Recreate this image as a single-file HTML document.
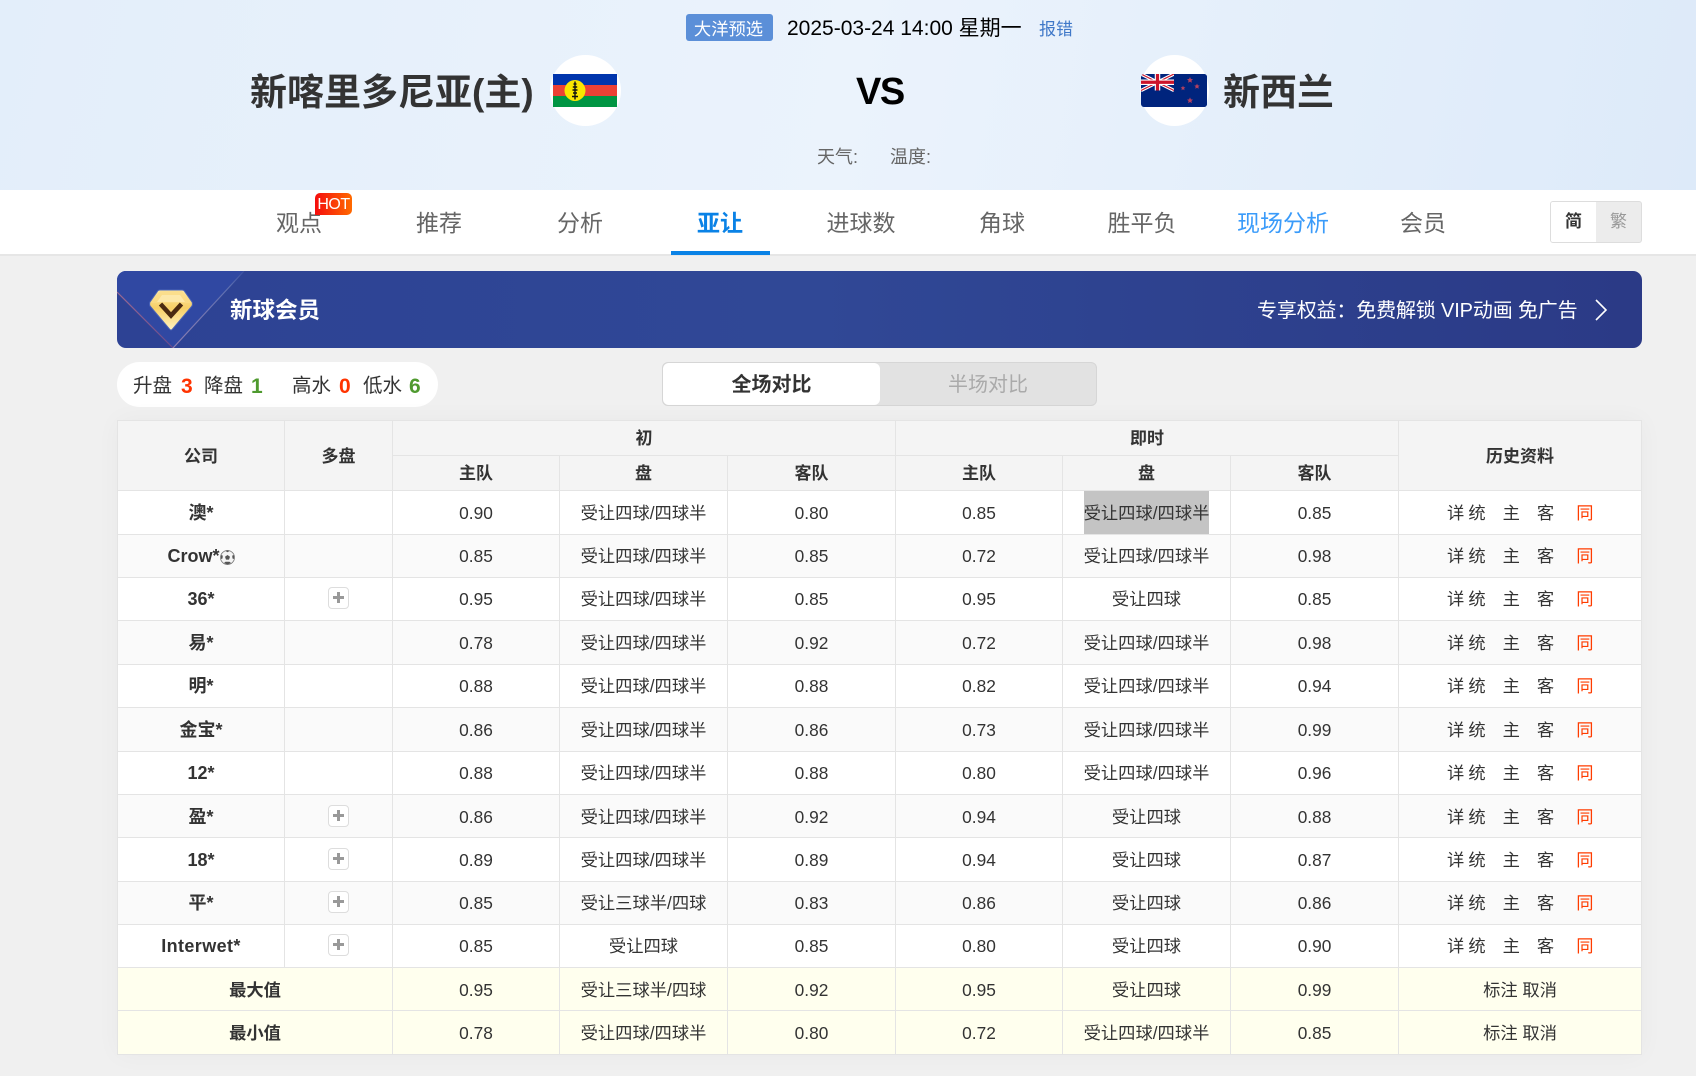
<!DOCTYPE html>
<html lang="zh-CN">
<head>
<meta charset="utf-8">
<title>亚让</title>
<style>
*{box-sizing:border-box}
html,body{margin:0;padding:0}
body{width:1696px;height:1076px;position:relative;overflow:hidden;background:#f0f0f0;font-family:"Liberation Sans","Noto Sans CJK SC",sans-serif;color:#333}
.a{position:absolute;white-space:nowrap}
#hd{left:0;top:0;width:1696px;height:190px;background:linear-gradient(100deg,#e3eefa 0%,#ebf3fc 50%,#ddeaf9 100%)}
#nav{left:0;top:190px;width:1696px;height:66px;background:#fff;border-bottom:2px solid #e6e6e6}
.n{top:207px;width:140px;text-align:center;font-size:23px;line-height:32px;color:#666}
table{border-collapse:collapse;table-layout:fixed;width:1524px;font-size:17.3px;color:#333;text-align:center}
td,th{border:1px solid #e4e4e4;padding:1px 0 0;vertical-align:middle;line-height:24px;overflow:hidden;white-space:nowrap}
th{background:#f4f4f4;font-weight:700;font-size:17px}
th.r{padding-top:3px}
tbody td{background:#fff}
tbody tr.e td{background:#fafafa}
tbody tr.s td{background:#ffffee}
tbody tr.u td{padding-top:0}
td.b{font-weight:700;font-size:18px}
td.h{text-align:left;padding-left:48px}
td.h i{font-style:normal;margin-right:17px}
td.h i.x{margin-right:4px}
td.h i.k{margin-right:22px}
td.h i.t{margin-right:0;color:#ff3c00}
.p{display:inline-block;width:21px;height:22px;border:1px solid #ddd;border-radius:4px;background:#fff;vertical-align:middle;position:relative;top:-2px}
.p:before{content:"";position:absolute;left:4px;top:8px;width:11px;height:3px;background:#999}
.p:after{content:"";position:absolute;left:8px;top:4px;width:3px;height:11px;background:#999}
.g{display:inline-block;background:#c4c4c4;line-height:44px;height:43px;vertical-align:top;margin-top:-1px;overflow:hidden}
</style>
</head>
<body>
<div class="a" id="hd"></div>
<div class="a" style="left:686px;top:14px;width:87px;height:27px;background:#5b8fd8;border-radius:3px;color:#fff;font-size:17.3px;line-height:30px;text-align:center;text-indent:-2px">大洋预选</div>
<div class="a" style="left:787px;top:15px;font-size:21px;line-height:27px;color:#000">2025-03-24 14:00 星期一</div>
<div class="a" style="left:1039px;top:16px;font-size:17px;line-height:27px;color:#3f78c8">报错</div>
<div class="a" style="left:250px;top:68px;font-size:37px;line-height:50px;font-weight:700;color:#333">新喀里多尼亚(主)</div>
<div class="a" style="left:550px;top:55px;width:71px;height:71px;border-radius:50%;background:#fff"></div>
<svg class="a" style="left:553px;top:74px" width="64" height="33" viewBox="0 0 64 33">
<rect width="64" height="11" fill="#0035ad"/><rect y="11" width="64" height="11" fill="#ed4135"/><rect y="22" width="64" height="11" fill="#009543"/>
<circle cx="22" cy="16.5" r="10.5" fill="#fae600"/>
<path d="M22 7.5V25.5M20.5 10h3M19.8 13h4.4M19.5 16h5M20 19h4M19 22.5h6" stroke="#111" stroke-width="1.4" fill="none"/>
</svg>
<div class="a" style="left:856px;top:65px;font-size:38px;line-height:54px;font-weight:700;color:#000;letter-spacing:-1.5px">VS</div>
<div class="a" style="left:1140px;top:55px;width:69px;height:71px;border-radius:50%;background:#fff"></div>
<svg class="a" style="left:1141px;top:74px" width="66" height="33" viewBox="0 0 66 33">
<defs><clipPath id="c"><rect width="66" height="33" rx="3"/></clipPath></defs>
<g clip-path="url(#c)">
<rect width="66" height="33" fill="#00247d"/>
<path d="M0 0L33 16.5M33 0L0 16.5" stroke="#fff" stroke-width="3.4"/>
<path d="M0 0L33 16.5M33 0L0 16.5" stroke="#cc142b" stroke-width="1.2"/>
<path d="M16.5 0V16.5M0 8.25H33" stroke="#fff" stroke-width="5.5"/>
<path d="M16.5 0V16.5M0 8.25H33" stroke="#cc142b" stroke-width="3.2"/>
<rect x="33" width="33" height="33" fill="#00247d"/>
<g fill="#b5405f">
<path d="M49 3l.9 2 2.1.2-1.6 1.4.5 2.1-1.9-1.1-1.9 1.1.5-2.1-1.6-1.4 2.1-.2z"/>
<path d="M56 9.6l.8 1.8 1.9.2-1.4 1.2.4 1.9-1.7-1-1.7 1 .4-1.9-1.4-1.2 1.9-.2z"/>
<path d="M42 11.6l.7 1.6 1.7.2-1.3 1.1.4 1.7-1.5-.9-1.5.9.4-1.7-1.3-1.1 1.7-.2z"/>
<path d="M49 23.4l.9 2 2.1.2-1.6 1.4.5 2.1-1.9-1.1-1.9 1.1.5-2.1-1.6-1.4 2.1-.2z"/>
</g></g>
</svg>
<div class="a" style="left:1223px;top:68px;font-size:37px;line-height:50px;font-weight:700;color:#333">新西兰</div>
<div class="a" style="left:817px;top:145px;font-size:18px;line-height:24px;color:#666">天气:</div>
<div class="a" style="left:890px;top:145px;font-size:18px;line-height:24px;color:#666">温度:</div>

<div class="a" id="nav"></div>
<div class="a n" style="left:229px">观点</div>
<div class="a" style="left:315px;top:193px;width:37px;height:22px;border-radius:5px 5px 5px 0;background:linear-gradient(90deg,#f50d0d,#ff6a00);color:#fff;font-size:16px;line-height:23px;text-align:center;letter-spacing:-.5px">HOT</div>
<div class="a n" style="left:369px">推荐</div>
<div class="a n" style="left:510px">分析</div>
<div class="a n" style="left:650px;color:#0a82e6;font-weight:700">亚让</div>
<div class="a" style="left:671px;top:251px;width:99px;height:4px;background:#0a82e6"></div>
<div class="a n" style="left:791px">进球数</div>
<div class="a n" style="left:932px">角球</div>
<div class="a n" style="left:1072px">胜平负</div>
<div class="a n" style="left:1213px;color:#3a9bfa">现场分析</div>
<div class="a n" style="left:1353px">会员</div>
<div class="a" style="left:1550px;top:201px;width:92px;height:42px;border:1px solid #ddd;border-radius:3px;background:#ececec;overflow:hidden">
<div style="position:absolute;left:0;top:0;width:45px;height:40px;background:#fff;color:#333;font-weight:700;font-size:17px;line-height:40px;text-align:center">简</div>
<div style="position:absolute;left:45px;top:0;width:45px;height:40px;color:#999;font-size:17px;line-height:40px;text-align:center">繁</div>
</div>

<svg class="a" style="left:117px;top:271px" width="1525" height="77" viewBox="0 0 1525 77">
<defs>
<linearGradient id="bg" x1="0" y1="0" x2="1" y2="0"><stop offset="0" stop-color="#2d4294"/><stop offset=".45" stop-color="#304896"/><stop offset="1" stop-color="#2b3a86"/></linearGradient>
<linearGradient id="go" x1="0" y1="0" x2="0" y2="1"><stop offset="0" stop-color="#fde9a8"/><stop offset=".45" stop-color="#f7cf66"/><stop offset="1" stop-color="#fff2c0"/></linearGradient>
<linearGradient id="l1" x1="0" y1="0" x2="1" y2="1"><stop offset="0" stop-color="#9c6a92"/><stop offset="1" stop-color="#6a4a8c"/></linearGradient>
<linearGradient id="l2" x1="0" y1="1" x2="1" y2="0"><stop offset="0" stop-color="#8f7fb0"/><stop offset=".8" stop-color="#5d6fb0"/><stop offset="1" stop-color="#3a4fa0"/></linearGradient>
<clipPath id="bc"><rect width="1525" height="77" rx="9"/></clipPath>
</defs>
<g clip-path="url(#bc)">
<rect width="1525" height="77" fill="url(#bg)"/>
<path d="M0 0H127L56 77L0 21Z" fill="#3048a2"/>
<path d="M0 21L56 77" stroke="url(#l1)" stroke-width="1.2" fill="none"/>
<path d="M56 77L127 0" stroke="url(#l2)" stroke-width="1.2" fill="none"/>
<path d="M43 19H65Q67 19 68 21L75 31Q76 33 75 35L55.5 58Q54 60 52.5 58L33 35Q32 33 33 31L40 21Q41 19 43 19Z" fill="url(#go)" stroke="#4a63b8" stroke-width="1"/>
<path d="M33 32L43 20H65L75 32Z" fill="#fbdc86" opacity=".7"/>
<path d="M45 24H63L68 31H40Z" fill="#fff0c0" opacity=".6"/>
<path d="M43.5 33L54 44.5L64.5 33" fill="none" stroke="#4a2a10" stroke-width="4.5"/>
</g>
</svg>
<div class="a" style="left:230px;top:294px;font-size:22.5px;line-height:34px;font-weight:700;color:#fff">新球会员</div>
<div class="a" style="left:1257px;top:297px;font-size:20px;line-height:28px;color:#fff;letter-spacing:-.15px">专享权益：免费解锁 VIP动画 免广告</div>
<svg class="a" style="left:1593px;top:298px" width="16" height="24" viewBox="0 0 16 24"><path d="M3 2L13 12L3 22" fill="none" stroke="#fff" stroke-width="1.6"/></svg>

<div class="a" style="left:117px;top:362px;width:321px;height:45px;border-radius:22.5px;background:#fff;font-size:19.5px;line-height:49px;color:#333">
<span style="position:absolute;left:16px">升盘</span><b style="position:absolute;left:64px;color:#ff3300;font-size:21px">3</b>
<span style="position:absolute;left:87px">降盘</span><b style="position:absolute;left:134px;color:#4f9a2f;font-size:21px">1</b>
<span style="position:absolute;left:175px">高水</span><b style="position:absolute;left:222px;color:#ff3300;font-size:21px">0</b>
<span style="position:absolute;left:246px">低水</span><b style="position:absolute;left:292px;color:#4f9a2f;font-size:21px">6</b>
</div>

<div class="a" style="left:662px;top:362px;width:435px;height:44px;background:#e2e2e2;border:1px solid #d6d6d6;border-radius:6px"></div>
<div class="a" style="left:663px;top:363px;width:217px;height:42px;background:#fff;border-radius:6px;font-size:20px;line-height:44px;font-weight:700;text-align:center;color:#333">全场对比</div>
<div class="a" style="left:880px;top:363px;width:216px;height:42px;font-size:20px;line-height:44px;text-align:center;color:#aaa">半场对比</div>

<div class="a" style="left:117px;top:420px;box-shadow:0 0 24px rgba(0,0,0,.035)">
<table>
<colgroup><col style="width:167px"><col style="width:108px"><col style="width:167px"><col style="width:168px"><col style="width:168px"><col style="width:167px"><col style="width:168px"><col style="width:168px"><col style="width:243px"></colgroup>
<thead>
<tr style="height:35px"><th rowspan="2" class="r">公司</th><th rowspan="2" class="r">多盘</th><th colspan="3">初</th><th colspan="3">即时</th><th rowspan="2" class="r">历史资料</th></tr>
<tr style="height:35px"><th>主队</th><th>盘</th><th>客队</th><th>主队</th><th>盘</th><th>客队</th></tr>
</thead>
<tbody>
<tr style="height:43px"><td class="b">澳*</td><td></td><td>0.90</td><td>受让四球/四球半</td><td>0.80</td><td>0.85</td><td><span class="g">受让四球/四球半</span></td><td>0.85</td><td class="h"><i class="x">详</i><i>统</i><i>主</i><i class="k">客</i><i class="t">同</i></td></tr>
<tr class="e u" style="height:43px"><td class="b">Crow*<svg width="15" height="15" viewBox="0 0 15 15" style="vertical-align:-3px"><circle cx="7.5" cy="7.5" r="7" fill="#f4f4f4" stroke="#777" stroke-width=".8"/><path d="M7.5 5L10 6.8 9 9.6H6L5 6.8Z" fill="#555"/><path d="M5.5 1L7.5 2.2 9.5 1 8 .4H7ZM1 5L2.8 5.6 2.5 8.5 1 9ZM14 5L12.2 5.6 12.5 8.5 14 9ZM4 13L5.5 11.8H9.5L11 13 7.5 14.6Z" fill="#555"/></svg></td><td></td><td>0.85</td><td>受让四球/四球半</td><td>0.85</td><td>0.72</td><td>受让四球/四球半</td><td>0.98</td><td class="h"><i class="x">详</i><i>统</i><i>主</i><i class="k">客</i><i class="t">同</i></td></tr>
<tr class="u" style="height:43px"><td class="b">36*</td><td><span class="p"></span></td><td>0.95</td><td>受让四球/四球半</td><td>0.85</td><td>0.95</td><td>受让四球</td><td>0.85</td><td class="h"><i class="x">详</i><i>统</i><i>主</i><i class="k">客</i><i class="t">同</i></td></tr>
<tr class="e" style="height:44px"><td class="b">易*</td><td></td><td>0.78</td><td>受让四球/四球半</td><td>0.92</td><td>0.72</td><td>受让四球/四球半</td><td>0.98</td><td class="h"><i class="x">详</i><i>统</i><i>主</i><i class="k">客</i><i class="t">同</i></td></tr>
<tr class="u" style="height:43px"><td class="b">明*</td><td></td><td>0.88</td><td>受让四球/四球半</td><td>0.88</td><td>0.82</td><td>受让四球/四球半</td><td>0.94</td><td class="h"><i class="x">详</i><i>统</i><i>主</i><i class="k">客</i><i class="t">同</i></td></tr>
<tr class="e" style="height:44px"><td class="b">金宝*</td><td></td><td>0.86</td><td>受让四球/四球半</td><td>0.86</td><td>0.73</td><td>受让四球/四球半</td><td>0.99</td><td class="h"><i class="x">详</i><i>统</i><i>主</i><i class="k">客</i><i class="t">同</i></td></tr>
<tr class="u" style="height:43px"><td class="b">12*</td><td></td><td>0.88</td><td>受让四球/四球半</td><td>0.88</td><td>0.80</td><td>受让四球/四球半</td><td>0.96</td><td class="h"><i class="x">详</i><i>统</i><i>主</i><i class="k">客</i><i class="t">同</i></td></tr>
<tr class="e" style="height:43px"><td class="b">盈*</td><td><span class="p"></span></td><td>0.86</td><td>受让四球/四球半</td><td>0.92</td><td>0.94</td><td>受让四球</td><td>0.88</td><td class="h"><i class="x">详</i><i>统</i><i>主</i><i class="k">客</i><i class="t">同</i></td></tr>
<tr style="height:44px"><td class="b">18*</td><td><span class="p"></span></td><td>0.89</td><td>受让四球/四球半</td><td>0.89</td><td>0.94</td><td>受让四球</td><td>0.87</td><td class="h"><i class="x">详</i><i>统</i><i>主</i><i class="k">客</i><i class="t">同</i></td></tr>
<tr class="e u" style="height:43px"><td class="b">平*</td><td><span class="p"></span></td><td>0.85</td><td>受让三球半/四球</td><td>0.83</td><td>0.86</td><td>受让四球</td><td>0.86</td><td class="h"><i class="x">详</i><i>统</i><i>主</i><i class="k">客</i><i class="t">同</i></td></tr>
<tr class="u" style="height:43px"><td class="b" style="letter-spacing:.4px">Interwet*</td><td><span class="p"></span></td><td>0.85</td><td>受让四球</td><td>0.85</td><td>0.80</td><td>受让四球</td><td>0.90</td><td class="h"><i class="x">详</i><i>统</i><i>主</i><i class="k">客</i><i class="t">同</i></td></tr>
<tr class="s" style="height:43px"><td class="b" colspan="2" style="font-size:17.3px">最大值</td><td>0.95</td><td>受让三球半/四球</td><td>0.92</td><td>0.95</td><td>受让四球</td><td>0.99</td><td>标注 取消</td></tr>
<tr class="s" style="height:44px"><td class="b" colspan="2" style="font-size:17.3px">最小值</td><td>0.78</td><td>受让四球/四球半</td><td>0.80</td><td>0.72</td><td>受让四球/四球半</td><td>0.85</td><td>标注 取消</td></tr>
</tbody>
</table>
</div>
</body>
</html>
